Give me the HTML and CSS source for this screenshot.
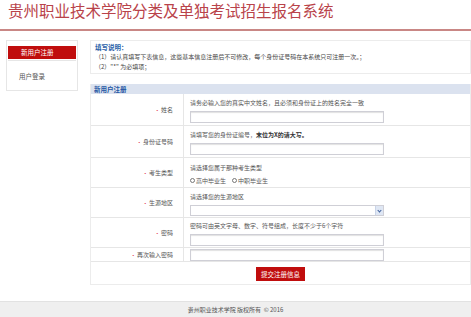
FILE: index.html
```html
<!DOCTYPE html>
<html lang="zh-CN">
<head>
  <meta charset="UTF-8">
  <meta name="viewport" content="width=device-width, initial-scale=1.0">
  <title>贵州职业技术学院分类及单独考试招生报名系统</title>
  <link rel="stylesheet" href="styles.css">
</head>
<body>
  <!-- 顶部标题 -->
  <div class="header">
    <h1>贵州职业技术学院分类及单独考试招生报名系统</h1>
  </div>

  <div class="wrap">
    <!-- 左侧菜单 -->
    <div class="side">
      <a class="side-item active">新用户注册</a>
      <a class="side-item">用户登录</a>
    </div>

    <div class="main">
      <!-- 填写说明 -->
      <div class="notice">
        <div class="notice-title">填写说明：</div>
        <p>（1）请认真填写下表信息，这些基本信息注册后不可修改，每个身份证号码在本系统只可注册一次。；</p>
        <p>（2）"*" 为必填项；</p>
      </div>

      <!-- 注册表单 -->
      <div class="form-box">
        <div class="form-head">新用户注册</div>
        <table class="form-table">
          <tr class="r1">
            <td class="label"><span class="req">•</span> 姓名</td>
            <td class="field">
              <div class="hint">请务必输入您的真实中文姓名，且必须和身份证上的姓名完全一致</div>
              <input type="text" class="ipt">
            </td>
          </tr>
          <tr class="r1">
            <td class="label"><span class="req">•</span> 身份证号码</td>
            <td class="field">
              <div class="hint">请填写您的身份证编号，<b>末位为X的请大写。</b></div>
              <input type="text" class="ipt">
            </td>
          </tr>
          <tr>
            <td class="label"><span class="req">•</span> 考生类型</td>
            <td class="field">
              <div class="hint">请选择您属于那种考生类型</div>
              <div class="radios">
                <label><span class="radio"></span>高中毕业生</label>
                <label><span class="radio"></span>中职毕业生</label>
              </div>
            </td>
          </tr>
          <tr>
            <td class="label"><span class="req">•</span> 生源地区</td>
            <td class="field">
              <div class="hint">请选择您的生源地区</div>
              <div class="sel"><span class="sel-arrow"></span></div>
            </td>
          </tr>
          <tr>
            <td class="label"><span class="req">•</span> 密码</td>
            <td class="field">
              <div class="hint">密码可由英文字母、数字、符号组成，长度不少于6个字符</div>
              <input type="password" class="ipt">
            </td>
          </tr>
          <tr class="r-short">
            <td class="label"><span class="req">•</span> 再次输入密码</td>
            <td class="field">
              <input type="password" class="ipt">
            </td>
          </tr>
          <tr class="r-btn">
            <td colspan="2"><button>提交注册信息</button></td>
          </tr>
        </table>
      </div>
    </div>
  </div>

  <div class="footer">贵州职业技术学院 版权所有 &nbsp;© 2016</div>
</body>
</html>
```

FILE: styles.css
```css
body {
  margin: 0;
  background: #fff;
  font-family: "Noto Sans CJK SC", "DejaVu Sans", sans-serif;
  color: #555;
  font-size: 6px;
}
.header {
  height: 29px;
  border-bottom: 2px solid #c98785;
}
.header h1 {
  margin: 0;
  padding: 0 0 0 8px;
  font-size: 15.5px;
  line-height: 20px;
  font-weight: normal;
  color: #b9434a;
}
.wrap {
  display: flex;
  align-items: flex-start;
  padding: 9px 0 0 6px;
  height: 261px;
}
.side {
  width: 68px;
  border: 1px solid #e6e6e6;
  padding: 5px 1px 7px;
  margin-right: 12px;
}
.side-item {
  display: block;
  height: 13px;
  line-height: 13px;
  padding-left: 13px;
  color: #555;
  font-size: 6.5px;
}
.side-item.active {
  background: #c00d0d;
  color: #fff;
  margin-bottom: 5px;
  border-bottom: 1px solid #fff;
  box-shadow: 0 1px 0 #e6e6e6;
}
.side-item + .side-item {
  padding-top: 5px;
  padding-left: 11px;
}
.main {
  flex: 1;
}
.notice {
  border: 1px solid #ececec;
  height: 32px;
  padding: 0 4px;
}
.notice-title {
  color: #2a5fa8;
  font-weight: bold;
  font-size: 6.5px;
  line-height: 9px;
  margin-top: 2px;
}
.notice p {
  margin: 0;
  line-height: 9.5px;
  font-size: 6px;
  color: #444;
}
.form-box {
  margin-top: 10px;
  border: 1px solid #ececec;
  border-top: 0;
}
.form-head {
  background: #dbe2ef;
  color: #2557a4;
  font-weight: bold;
  font-size: 6.5px;
  height: 10px;
  line-height: 10px;
  padding-left: 3px;
}
.form-table {
  width: 100%;
  border-collapse: collapse;
}
.form-table td {
  border-bottom: 1px solid #e6e6e6;
  padding: 0;
}
.label {
  width: 82px;
  text-align: right;
  padding-right: 10px !important;
  border-right: 1px solid #e6e6e6;
  color: #555;
  white-space: nowrap;
}
.req {
  color: #d23;
  font-size: 5px;
}
.field {
  padding: 3px 6px 1px !important;
  height: 25px;
}
.r1 .field {
  height: 27px;
}
.hint {
  line-height: 10px;
  height: 10px;
  margin-bottom: 3px;
  color: #555;
}
.hint b {
  color: #333;
}
.ipt {
  display: block;
  box-sizing: border-box;
  width: 194px;
  height: 12px;
  margin: 0;
  border: 1px solid #cfcfd6;
  box-shadow: inset 0 1px 1px #e2e2e2;
  background: #fff;
}
.radios {
  display: flex;
  gap: 6px;
  line-height: 9px;
  color: #555;
}
.radios label {
  display: flex;
  align-items: center;
}
.radio {
  display: inline-block;
  box-sizing: border-box;
  width: 5px;
  height: 5px;
  border: 1px solid #777;
  border-radius: 50%;
  margin-right: 1px;
}
.sel {
  box-sizing: border-box;
  width: 194px;
  height: 11px;
  border: 1px solid #cfcfd6;
  display: flex;
  justify-content: flex-end;
}
.sel-arrow {
  width: 7px;
  background: #dfe7f4;
  border-left: 1px solid #c9d4e8;
  position: relative;
}
.sel-arrow::after {
  content: "";
  position: absolute;
  left: 2px;
  top: 3px;
  width: 2px;
  height: 2px;
  border-right: 1px solid #3d5f9c;
  border-bottom: 1px solid #3d5f9c;
  transform: rotate(45deg);
}
.r-short .field {
  height: 12px;
  padding: 1px 6px 0 !important;
}
.r-btn td {
  height: 22px;
  text-align: center;
  border-bottom: 0;
}
button {
  background: #c00d0d;
  color: #fff;
  border: 0;
  border-radius: 0;
  font-family: inherit;
  font-size: 6.5px;
  width: 49px;
  height: 14px;
  padding: 0;
  margin-top: 2px;
  cursor: pointer;
}
.footer {
  height: 16px;
  line-height: 16px;
  background: #efefef;
  border-top: 1px solid #e2e2e2;
  text-align: center;
  color: #555;
  font-size: 6px;
}
```
